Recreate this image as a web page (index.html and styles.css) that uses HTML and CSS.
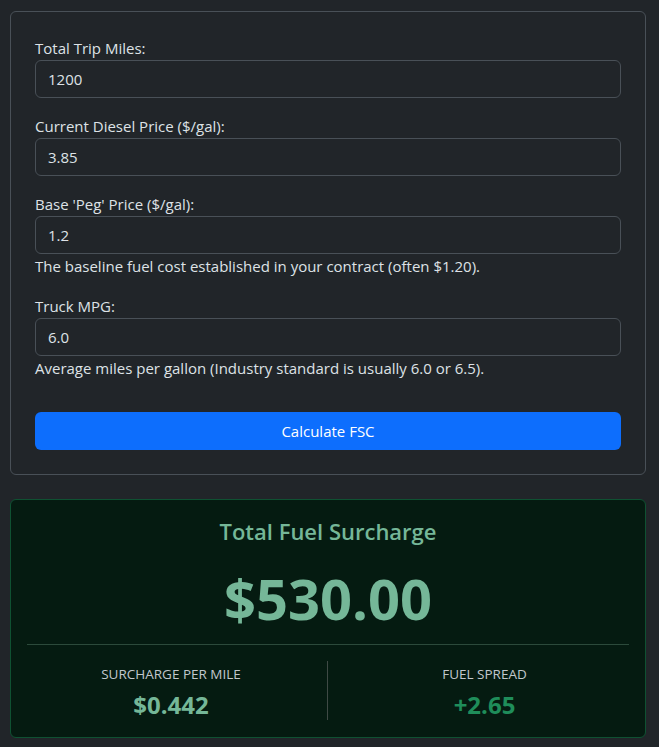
FILE: index.html
```html
<!DOCTYPE html>
<html lang="en">
<head>
    <meta charset="UTF-8">
    <meta name="viewport" content="width=device-width, initial-scale=1.0">
    <title>Fuel Surcharge Calculator</title>
    <link rel="stylesheet" href="styles.css">
</head>
<body>
    <div class="calc-card">
        <div class="form-group">
            <label for="miles">Total Trip Miles:</label>
            <input type="text" id="miles" value="1200">
        </div>
        <div class="form-group">
            <label for="diesel">Current Diesel Price ($/gal):</label>
            <input type="text" id="diesel" value="3.85">
        </div>
        <div class="form-group">
            <label for="peg">Base 'Peg' Price ($/gal):</label>
            <input type="text" id="peg" value="1.2">
            <div class="form-text">The baseline fuel cost established in your contract (often $1.20).</div>
        </div>
        <div class="form-group last">
            <label for="mpg">Truck MPG:</label>
            <input type="text" id="mpg" value="6.0">
            <div class="form-text">Average miles per gallon (Industry standard is usually 6.0 or 6.5).</div>
        </div>
        <button class="calc-button">Calculate FSC</button>
    </div>

    <div class="result-card">
        <h4 class="result-title">Total Fuel Surcharge</h4>
        <div class="result-total">$530.00</div>
        <hr>
        <div class="result-row">
            <div class="result-col">
                <div class="result-label">SURCHARGE PER MILE</div>
                <div class="result-value">$0.442</div>
            </div>
            <div class="result-col">
                <div class="result-label">FUEL SPREAD</div>
                <div class="result-value spread">+2.65</div>
            </div>
        </div>
    </div>
</body>
</html>
```

FILE: styles.css
```css
body {
    font-family: "Open Sans", "Noto Sans", sans-serif;
    font-size: 15px;
    line-height: 24px;
    color: #dee2e6;
    background-color: #212529;
    margin: 0;
    padding: 11px 13px 10px 10px;
}
.calc-card {
    border: 1px solid #495057;
    border-radius: 6px;
    padding: 24px;
}
.form-group {
    margin-bottom: 16px;
}
.form-group.last {
    margin-bottom: 32px;
}
label {
    display: block;
}
input {
    display: block;
    box-sizing: border-box;
    width: 100%;
    height: 38px;
    padding: 6px 12px;
    font-family: inherit;
    font-size: 15px;
    color: #dee2e6;
    background-color: #212529;
    border: 1px solid #495057;
    border-radius: 6px;
    outline: none;
}
.calc-button {
    display: block;
    width: 100%;
    height: 38px;
    font-family: inherit;
    font-size: 15px;
    color: #fff;
    background-color: #0d6efd;
    border: none;
    border-radius: 6px;
    cursor: pointer;
}
.result-card {
    margin-top: 24px;
    background-color: #051b11;
    border: 1px solid #0f5132;
    border-radius: 6px;
    padding: 13px 16px 17px;
    text-align: center;
}
.result-title {
    margin: 0;
    font-size: 22px;
    font-weight: 600;
    line-height: 36px;
    color: #75b798;
}
.result-total {
    margin-top: 14px;
    font-size: 56px;
    font-weight: 700;
    line-height: 70px;
    color: #75b798;
}
hr {
    margin: 11px 0 16px;
    border: 0;
    border-top: 1px solid #2c4a3b;
}
.result-row {
    display: grid;
    grid-template-columns: 1fr 1fr;
    margin: 0 -12px;
}
.result-col {
    padding: 2px 12px 0;
}
.result-col:first-child {
    border-right: 1px solid #3f4a45;
}
.result-label {
    font-size: 13.5px;
    color: #c1c7cd;
    line-height: 22px;
}
.result-value {
    margin-top: 5px;
    font-size: 24px;
    font-weight: 700;
    line-height: 30px;
    color: #75b798;
}
.result-value.spread {
    color: #1f8d5a;
}
```
